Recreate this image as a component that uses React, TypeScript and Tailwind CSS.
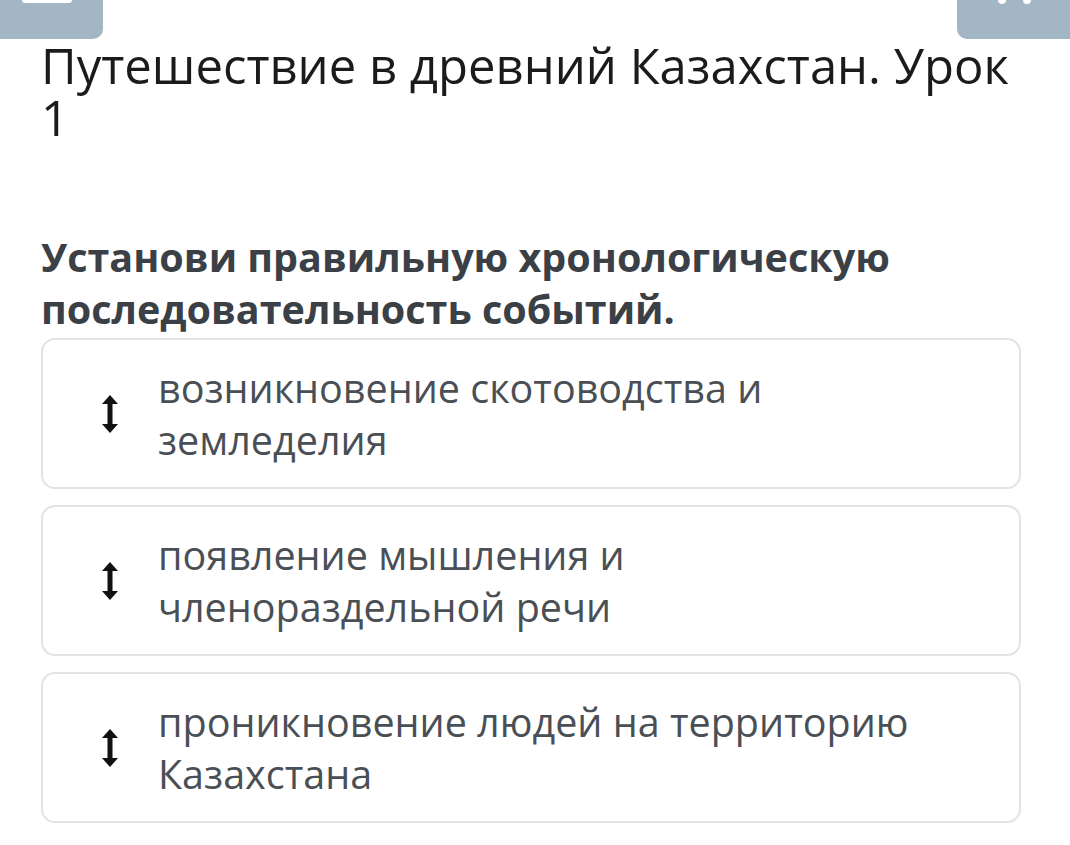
const items = [
  "возникновение скотоводства и земледелия",
  "появление мышления и членораздельной речи",
  "проникновение людей на территорию Казахстана",
];

function DragArrow() {
  return (
    <svg width="18" height="40" viewBox="0 0 18 40" className="shrink-0">
      <path d="M9 1 L17 10 L11.5 10 L11.5 30 L17 30 L9 39 L1 30 L6.5 30 L6.5 10 L1 10 Z" fill="#111" />
    </svg>
  );
}

export default function App() {
  return (
    <div className="min-h-[845px] w-[1070px] bg-white" style={{ fontFamily: '"Open Sans", "Noto Sans", sans-serif' }}>
      <div className="flex h-[39px] justify-between">
        <div className="relative h-[39px] w-[103px] rounded-br-[10px] bg-[#a3b6c4]">
          <div className="absolute left-[22px] top-0 h-[3px] w-[50px] rounded-b-sm bg-white" />
        </div>
        <div className="relative h-[39px] w-[113px] rounded-bl-[10px] bg-[#a3b6c4]">
          <div className="absolute left-[41px] top-0 h-[4px] w-[8px] rounded-b-full bg-white" />
          <div className="absolute left-[66px] top-0 h-[4px] w-[8px] rounded-b-full bg-white" />
        </div>
      </div>
      <div className="px-[41px]">
        <h1 className="mt-0 text-[49px] leading-[52px] font-normal text-[#1b1b1b]">
          Путешествие в древний Казахстан. Урок 1
        </h1>
        <p className="mt-[88px] text-[39.5px] leading-[52px] font-bold text-[#3b4046]">
          Установи правильную хронологическую последовательность событий.
        </p>
        <div className="mt-[3px] flex w-[980px] flex-col gap-[16px]">
          {items.map((t) => (
            <div
              key={t}
              className="flex h-[151px] items-center rounded-[14px] border-2 border-[#e1e4e6] bg-white pl-[58px] pr-6"
            >
              <DragArrow />
              <span className="ml-[39px] max-w-[790px] text-[39.5px] leading-[52px] text-[#4a4f55]">{t}</span>
            </div>
          ))}
        </div>
      </div>
    </div>
  );
}
